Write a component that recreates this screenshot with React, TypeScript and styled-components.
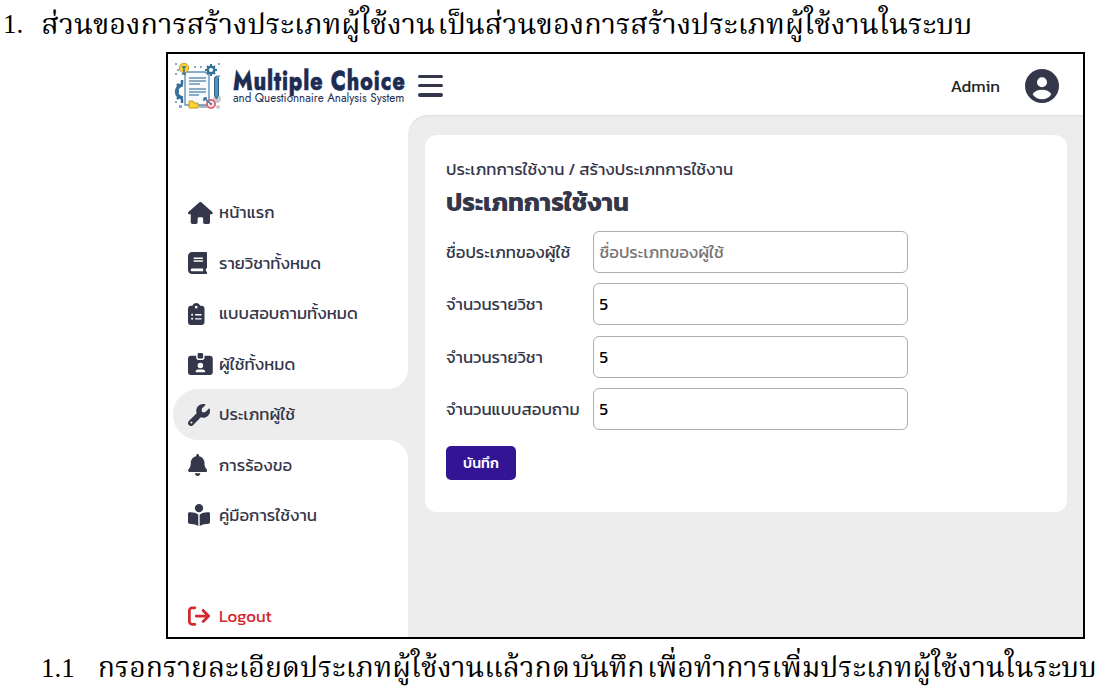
import React from 'react';
import styled, { createGlobalStyle } from 'styled-components';
import {
  FaHouse, FaBook, FaClipboardList, FaIdCardClip, FaWrench, FaBell,
  FaBookOpenReader, FaArrowRightFromBracket,
} from 'react-icons/fa6';

const ink = '#34364a';
const surface = '#ededed';
const uiFont = '"Kanit", "Prompt", "Noto Sans Thai", "Noto Sans", sans-serif';

const GlobalStyle = createGlobalStyle`
  * { box-sizing: border-box; }
  body { margin: 0; background: #fff; overflow: hidden; }
`;

const Page = styled.main`
  width: 1110px;
  height: 697px;
  background: #fff;
  display: flex;
  flex-direction: column;
  font-family: ${uiFont};
`;

const Caption = styled.div<{ $h: number; $left: number; $gap: number; $size: number }>`
  height: ${p => p.$h}px;
  flex: none;
  padding-left: ${p => p.$left}px;
  display: flex;
  gap: ${p => p.$gap}px;
  align-items: center;
  color: #000;
  font-family: "Angsana New", "Norasi", "Kinnari", "Noto Serif Thai", "Trirong", "Taviraj", "Liberation Serif", serif;
  font-size: ${p => p.$size}px;
  line-height: 44px;
  word-spacing: -5px;
  white-space: nowrap;
`;

const Number = styled.span`
  font-family: "Liberation Serif", serif;
  font-size: 27px;
  line-height: 40px;
  padding-bottom: 4px;
`;

const Frame = styled.section`
  width: 919px;
  height: 587px;
  flex: none;
  margin-left: 166px;
  border: 2px solid #000;
  display: flex;
  flex-direction: column;
  background: #fff;
  overflow: hidden;
`;

const Header = styled.header`
  height: 61px;
  flex: none;
  display: flex;
  align-items: center;
  padding: 2px 24px 0 6px;
  color: #222;
`;

const Brand = styled.div`
  width: 173px;
  margin-left: 11px;
  display: flex;
  flex-direction: column;
  color: #1c2c52;
  font-family: "Jost", "Lato", sans-serif;
  white-space: nowrap;
`;

const BrandName = styled.strong`
  width: 214px;
  font-size: 27px;
  line-height: 25px;
  font-weight: 800;
  letter-spacing: 1px;
  -webkit-text-stroke: 0.4px #1c2c52;
  transform: scaleX(0.797);
  transform-origin: 0 0;
`;

const BrandSub = styled.span`
  font-size: 11.65px;
  line-height: 11px;
`;

const Burger = styled.span`
  width: 25px;
  height: 22px;
  margin-left: 12px;
  display: flex;
  flex-direction: column;
  justify-content: space-between;
  i { height: 3.5px; border-radius: 2px; background: ${ink}; }
`;

const Account = styled.div`
  margin-left: auto;
  display: flex;
  align-items: center;
  gap: 25px;
  font-size: 16.8px;
  span { padding-top: 2px; }
`;

const Body = styled.div`
  flex: 1;
  min-height: 0;
  display: flex;
  background: #fff;
`;

const Sidebar = styled.nav`
  width: 240px;
  padding: 72.6px 0 0 5px;
  display: flex;
  flex-direction: column;
`;

const Item = styled.a<{ $active?: boolean; $danger?: boolean }>`
  position: relative;
  height: 50.45px;
  flex: none;
  padding-left: 15px;
  margin-top: ${p => (p.$danger ? '50.4px' : '0')};
  display: grid;
  grid-template-columns: 31px 1fr;
  align-items: center;
  font-size: 16.8px;
  color: ${p => (p.$danger ? '#d3282d' : ink)};
  background: ${p => (p.$active ? surface : 'transparent')};
  border-radius: 25px 0 0 25px;
  &::before, &::after {
    content: "";
    display: ${p => (p.$active ? 'block' : 'none')};
    position: absolute;
    right: 0;
    width: 20px;
    height: 20px;
  }
  &::before { top: -20px; background: radial-gradient(circle at 0 0, transparent 19.5px, ${surface} 20.5px); }
  &::after { bottom: -20px; background: radial-gradient(circle at 0 100%, transparent 19.5px, ${surface} 20.5px); }
`;

const Glyph = styled.span<{ $w: number }>`
  display: flex;
  svg { flex: none; width: ${p => p.$w}px; height: 22px; }
`;

const Content = styled.div`
  flex: 1;
  padding: 20px 16px 0 17px;
  background: ${surface};
  border-top-left-radius: 20px;
  box-shadow: inset 0 2px 2px -1px rgba(0, 0, 0, 0.08);
`;

const Card = styled.form`
  height: 377px;
  padding: 21px 21px 0;
  border-radius: 12px;
  background: #fff;
  color: ${ink};
  font-size: 16.8px;
`;

const Crumb = styled.div`
  height: 28px;
  line-height: 28px;
`;

const Title = styled.h1`
  margin: 0 0 11.6px;
  height: 35px;
  line-height: 36px;
  font-size: 25.2px;
  font-weight: 700;
`;

const Field = styled.label`
  height: 42px;
  margin-bottom: 10.6px;
  display: grid;
  grid-template-columns: 147px 315px;
  align-items: center;
`;

const FieldLabel = styled.span`
  padding-top: 1px;
`;

const Input = styled.input`
  width: 100%;
  height: 42px;
  padding: 1px 5.5px 0;
  border: 1px solid #aeaeae;
  border-radius: 6px;
  background: #fff;
  font: 16.8px ${uiFont};
  color: #000;
  outline: none;
  &::placeholder { color: #757575; }
`;

const Save = styled.button`
  width: 70px;
  height: 34px;
  margin-top: 5px;
  padding: 0;
  border: 0;
  border-radius: 5px;
  background: #321494;
  color: #fff;
  font: 500 14.4px ${uiFont};
`;

function Logo() {
  return (
    <svg width="48" height="48" viewBox="0 0 48 48" fill="none">
      <path fill="#87a9c4" d="M1 1h2v2H1zM3 7h2v2H3zM1 11h2v2H1zM20 4h2v2h-2zM26 4h2v2h-2zM44 1h2v2h-2zM44 13h2v2h-2zM1 39h2v2H1zM5 43h3v3H5z" />
      <circle cx="43" cy="37" r="4" fill="#c8cbd0" />
      <path d="M25 43h8v3h-8z" fill="#aab6c4" />
      <circle cx="44" cy="45" r="2" fill="#c8cbd0" />
      <path d="M9 23a6 6 0 0 0 0 13" stroke="#36709b" strokeWidth="3.5" />
      <path d="M1 29.500h4M3 22l3 3M3 37l3-3M8 18v4M8 37v4" stroke="#36709b" strokeWidth="2.500" />
      <path d="M11 10h20l4 3v30H11z" fill="#f7fafc" stroke="#6792b5" strokeWidth="1.400" />
      <path d="M15 16h17M15 19h17M15 22h11M15 27h17M15 30h17M15 33h10" stroke="#6792b5" strokeWidth="1.300" />
      <circle cx="10" cy="6" r="4.700" fill="#ffd32c" stroke="#c49d31" />
      <path d="M8 5h4M10 5v7M8 12h4" stroke="#36709b" strokeWidth="1.500" />
      <circle cx="37" cy="8" r="3.300" stroke="#36709b" strokeWidth="2.500" />
      <path d="M37 2v3M37 11v3M31 8h3M40 8h3M33 4l2 2M39 10l2 2M41 4l-2 2M35 10l-2 2" stroke="#36709b" strokeWidth="2" />
      <path d="M40.500 16q2-4 4 0v17l-2 4-2-4z" fill="#5c8fb6" stroke="#285e87" />
      <path d="M15 39h4l1 2h4v5h-9z" fill="#ffd32c" stroke="#c79b24" />
      <circle cx="37" cy="42" r="4" fill="#fff" stroke="#dd6472" strokeWidth="2" />
      <circle cx="37" cy="42" r="1.500" fill="#dd6472" />
      <path d="M37 42l-7-6m0 0v3m0-3h3" stroke="#36709b" strokeWidth="1.500" />
    </svg>
  );
}

function Avatar() {
  return (
    <svg width="34" height="34" viewBox="0 0 34 34">
      <circle cx="17" cy="17" r="17" fill={ink} />
      <circle cx="17" cy="13.2" r="5" fill="#fff" />
      <path d="M7.600 25.300C9.600 22 13 20.800 17 20.800s7.400 1.200 9.400 4.500C24.200 28.700 20.800 30.300 17 30.300S9.800 28.700 7.600 25.300z" fill="#fff" />
    </svg>
  );
}

const items = [
  { icon: <FaHouse />, w: 24.75, label: 'หน้าแรก' },
  { icon: <FaBook />, w: 19.25, label: 'รายวิชาทั้งหมด' },
  { icon: <FaClipboardList />, w: 16.5, label: 'แบบสอบถามทั้งหมด' },
  { icon: <FaIdCardClip />, w: 24.75, label: 'ผู้ใช้ทั้งหมด' },
  { icon: <FaWrench />, w: 22, label: 'ประเภทผู้ใช้', active: true },
  { icon: <FaBell />, w: 19.25, label: 'การร้องขอ' },
  { icon: <FaBookOpenReader />, w: 22, label: 'คู่มือการใช้งาน' },
];

const fields = [
  { label: 'ชื่อประเภทของผู้ใช้', placeholder: 'ชื่อประเภทของผู้ใช้' },
  { label: 'จำนวนรายวิชา', value: '5' },
  { label: 'จำนวนรายวิชา', value: '5' },
  { label: 'จำนวนแบบสอบถาม', value: '5' },
];

export default function App() {
  return (
    <Page>
      <GlobalStyle />
      <Caption $h={52} $left={3} $gap={18} $size={28.9}>
        <Number>1.</Number>
        <span>ส่วนของการสร้างประเภทผู้ใช้งาน เป็นส่วนของการสร้างประเภทผู้ใช้งานในระบบ</span>
      </Caption>
      <Frame>
        <Header>
          <Logo />
          <Brand>
            <BrandName>Multiple Choice</BrandName>
            <BrandSub>and Questionnaire Analysis System</BrandSub>
          </Brand>
          <Burger><i /><i /><i /></Burger>
          <Account><span>Admin</span><Avatar /></Account>
        </Header>
        <Body>
          <Sidebar>
            {items.map(it => (
              <Item key={it.label} $active={it.active}>
                <Glyph $w={it.w}>{it.icon}</Glyph><span>{it.label}</span>
              </Item>
            ))}
            <Item $danger><Glyph $w={22}><FaArrowRightFromBracket /></Glyph><span>Logout</span></Item>
          </Sidebar>
          <Content>
            <Card>
              <Crumb>ประเภทการใช้งาน / สร้างประเภทการใช้งาน</Crumb>
              <Title>ประเภทการใช้งาน</Title>
              {fields.map((f, i) => (
                <Field key={i}>
                  <FieldLabel>{f.label}</FieldLabel>
                  <Input placeholder={f.placeholder} defaultValue={f.value} />
                </Field>
              ))}
              <Save type="button">บันทึก</Save>
            </Card>
          </Content>
        </Body>
      </Frame>
      <Caption $h={62} $left={41} $gap={23} $size={28.4}>
        <Number>1.1</Number>
        <span>กรอกรายละเอียดประเภทผู้ใช้งานแล้วกด บันทึก เพื่อทำการเพิ่มประเภทผู้ใช้งานในระบบ</span>
      </Caption>
    </Page>
  );
}
